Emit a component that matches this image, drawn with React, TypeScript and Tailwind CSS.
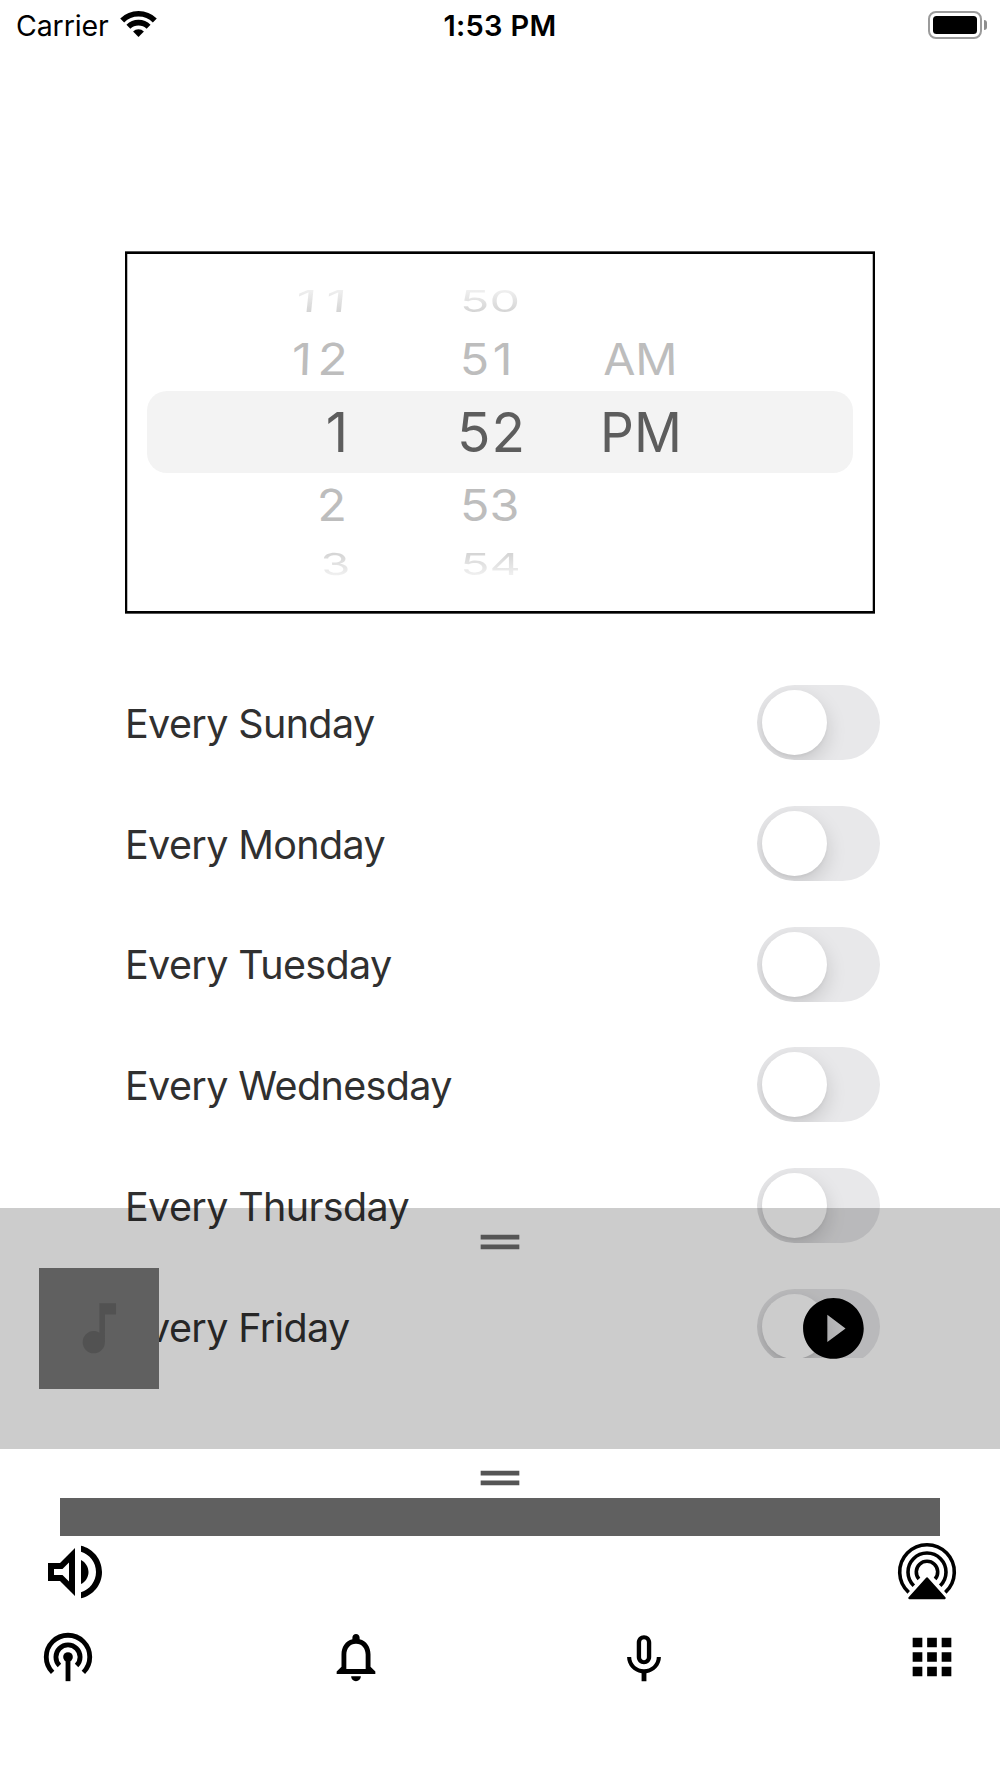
import React from "react";

type CellProps = { text: string; sx?: number; sy?: number; skew?: number; dx?: number; dy?: number; ls?: number };

const DAYS = ["Sunday", "Monday", "Tuesday", "Wednesday", "Thursday", "Friday"];

const ROWS = [
  "h-[58px] bg-gradient-to-b from-[#f0f0f0] from-15% to-[#d4d4d4] to-85% bg-clip-text text-transparent",
  "h-[61px] text-[#bdbdbd]",
  "h-[82px] text-[#5d5d5d]",
  "h-[61px] text-[#bdbdbd]",
  "h-[58px] bg-gradient-to-b from-[#d4d4d4] from-15% to-[#f0f0f0] to-85% bg-clip-text text-transparent",
];

function Wheel({ cells, origin, className }: { cells: (CellProps | null)[]; origin: string; className: string }) {
  return (
    <div className={`flex flex-col text-[55px] ${className}`}>
      {cells.map((c, i) => (
        <div
          key={i}
          className={`whitespace-nowrap leading-none flex items-center ${ROWS[i]}`}
          style={
            c
              ? {
                  letterSpacing: c.ls ?? 0,
                  marginRight: -(c.ls ?? 0),
                  transformOrigin: origin,
                  transform: `translate(${c.dx ?? 0}px, ${c.dy ?? 0}px) skewX(${c.skew ?? 0}deg) scale(${c.sx ?? 1}, ${c.sy ?? 1})`,
                }
              : undefined
          }
        >
          {c ? c.text : ""}
        </div>
      ))}
    </div>
  );
}

function Switch() {
  return (
    <div className="h-[75px] w-[123px] overflow-hidden rounded-full bg-[#e8e8ea] px-[4.5px] py-[5px]">
      <div className="size-[65px] rounded-full bg-white shadow-[0_8px_20px_rgba(0,0,0,0.15),0_2px_3px_rgba(0,0,0,0.04)]" />
    </div>
  );
}

function Icon({ d, className }: { d: string; className: string }) {
  return (
    <svg viewBox="0 0 24 24" fill="currentColor" className={className}>
      <path d={d} />
    </svg>
  );
}

const HANDLE = "M20 9H4v2h16V9zM4 15h16v-2H4v2z";
const NOTE = "M12 3v10.55c-.59-.34-1.27-.55-2-.55-2.21 0-4 1.79-4 4s1.79 4 4 4 4-1.79 4-4V7h4V3h-6z";
const PLAY = "M12 2C6.48 2 2 6.48 2 12s4.48 10 10 10 10-4.48 10-10S17.52 2 12 2zm-2 14.5v-9l6 4.5-6 4.5z";
const VOLUME =
  "M3 9v6h4l5 5V4L7 9H3zm7-.17v6.34L7.83 13H5v-2h2.83L10 8.83zM16.5 12c0-1.77-1.02-3.29-2.5-4.03v8.05c1.48-.73 2.5-2.25 2.5-4.02zM14 3.23v2.06c2.89.86 5 3.54 5 6.71s-2.11 5.85-5 6.71v2.06c4.01-.91 7-4.49 7-8.77s-2.99-7.86-7-8.77z";
const BELL =
  "M12 22c1.1 0 2-.9 2-2h-4c0 1.1.89 2 2 2zm6-6v-5c0-3.07-1.64-5.64-4.5-6.32V4c0-.83-.67-1.5-1.5-1.5s-1.5.67-1.5 1.5v.68C7.63 5.36 6 7.92 6 11v5l-2 2v1h16v-1l-2-2zm-2 1H8v-6c0-2.48 1.51-4.5 4-4.5s4 2.02 4 4.5v6z";
const MIC =
  "M12 15c1.66 0 2.99-1.34 2.99-3L15 6c0-1.66-1.34-3-3-3S9 4.34 9 6v6c0 1.66 1.34 3 3 3zm-1.2-9.1c0-.66.54-1.2 1.2-1.2.66 0 1.2.54 1.2 1.2l-.01 6.2c0 .66-.53 1.2-1.19 1.2-.66 0-1.2-.54-1.2-1.2V5.9zm6.5 6.1c0 3-2.54 5.1-5.3 5.1S6.7 15 6.7 12H5c0 3.41 2.72 6.23 6 6.72V22h2v-3.28c3.28-.48 6-3.3 6-6.72h-1.7z";
const APPS =
  "M4 8h4V4H4v4zm6 12h4v-4h-4v4zm-6 0h4v-4H4v4zm0-6h4v-4H4v4zm6 0h4v-4h-4v4zm6-10v4h4V4h-4zm-6 4h4V4h-4v4zm6 6h4v-4h-4v4zm0 6h4v-4h-4v4z";

function StatusBar() {
  return (
    <header className="grid h-[50px] shrink-0 grid-cols-3 items-center text-[28.5px] leading-none text-black">
      <div className="flex items-center gap-[11px] pl-4">
        <span className="w-[93px] whitespace-nowrap pt-[2px] tracking-[-0.1px]">Carrier</span>
        <svg viewBox="0 0 37 27" className="-mt-[3px] h-[27px] w-[37px]">
          <g fill="none" stroke="#000" strokeWidth="5.6">
            <path d="M2.2 10.4A23.2 23.2 0 0 1 34.8 10.4" />
            <path d="M8.4 16.8A14.4 14.4 0 0 1 28.6 16.8" />
          </g>
          <path d="M18.5 27l-5.4-5.5a7.7 7.7 0 0 1 10.8 0z" />
        </svg>
      </div>
      <div className="text-center text-[29px] font-semibold tracking-[0.3px]">
        <span>1:53 PM</span>
      </div>
      <div className="-mt-[2px] flex items-center justify-end gap-[2.5px] pr-[13px] pt-px">
        <div className="h-[28px] w-[54px] shrink-0 rounded-[8px] border-2 border-[#9b9b9b] p-[3px]">
          <div className="h-[18px] w-[44px] rounded-[3.5px] bg-black" />
        </div>
        <div className="h-[10px] w-[3px] rounded-r-full bg-[#8e8e8e]" />
      </div>
    </header>
  );
}

function Broadcast() {
  return (
    <svg viewBox="0 0 24 24" className="size-[58px]">
      <g fill="none" stroke="#000" strokeWidth="2">
        <path d="M5.64 18.36a9 9 0 1 1 12.72 0" />
        <path d="M8.46 15.54a5 5 0 1 1 7.08 0" />
        <path d="M12 12v10" />
      </g>
      <circle cx="12" cy="12" r="2" />
    </svg>
  );
}

function AirPlay() {
  return (
    <svg viewBox="-30 -30 60 60" className="size-[60px]">
      <g fill="none" stroke="#000" strokeWidth="3.6">
        <path d="M-18.3 20.3A27.3 27.3 0 1 1 18.3 20.3" />
        <path d="M-13.2 13.7A19 19 0 1 1 13.2 13.7" />
        <path d="M-8.1 7A10.7 10.7 0 1 1 8.1 7" />
      </g>
      <path d="M-17.5 26L0 6.5L17.5 26z" stroke="#000" strokeWidth="2.4" strokeLinejoin="round" />
    </svg>
  );
}

export default function App() {
  return (
    <div className="relative flex h-[1778px] w-[1000px] flex-col overflow-hidden bg-white font-['Inter','Liberation_Sans',sans-serif]">
      <StatusBar />

      <main className="flex h-[1308px] shrink-0 flex-col overflow-hidden pt-[202px]">
        <section className="relative ml-[125px] h-[361px] w-[750px] shrink-0 border-2 border-black shadow-[0_-1px_0_#555,0_1px_0_#555,inset_1px_0_0_#bbb,inset_-1px_0_0_#bbb]">
          <div className="absolute left-[20px] top-[137px] h-[82px] w-[706px] rounded-[20px] bg-[#f3f3f3]" />
          <div className="relative flex pt-[18px]">
            <Wheel
              className="w-[220px] items-end"
              origin="right center"
              cells={[
                { text: "11", sx: 0.92, sy: 0.55, skew: -6, dx: -1, ls: 10 },
                { text: "12", sx: 0.89, sy: 0.8, skew: -2, dy: -1, ls: 7 },
                { text: "1", dx: 1 },
                { text: "2", sx: 0.88, sy: 0.8, skew: 2, dy: 2 },
                { text: "3", sx: 0.86, sy: 0.55, skew: 5, dx: 3, dy: 1 },
              ]}
            />
            <Wheel
              className="ml-[76px] w-[136px] items-center"
              origin="center"
              cells={[
                { text: "50", sx: 0.88, sy: 0.55, dx: -1 },
                { text: "51", sx: 0.88, sy: 0.8, dx: -5, dy: -1, ls: 4 },
                { text: "52", ls: 1 },
                { text: "53", sx: 0.88, sy: 0.8, dx: -1, dy: 2 },
                { text: "54", sx: 0.88, sy: 0.55, dx: -1, dy: 1 },
              ]}
            />
            <Wheel
              className="ml-[41px] items-start"
              origin="left center"
              cells={[null, { text: "AM", sx: 0.85, sy: 0.8, skew: 1, dx: 3, dy: -1 }, { text: "PM", sx: 0.965, dx: 0 }, null, null]}
            />
          </div>
        </section>

        <ul className="mt-[72px] flex shrink-0 flex-col gap-[45.8px] pl-[125px] pr-[120px]">
          {DAYS.map((d) => (
            <li key={d} className="flex h-[75px] items-center justify-between">
              <span className="whitespace-nowrap pt-[4px] text-[39.5px] leading-none tracking-[-0.63px] text-[#303030]">Every {d}</span>
              <Switch />
            </li>
          ))}
        </ul>
      </main>

      {/* Collapsed player, translucent over the end of the list */}
      <section className="absolute left-0 top-[1208px] h-[241px] w-full bg-black/20">
        <div className="flex h-[60px] items-center justify-center pt-[7px]">
          <Icon d={HANDLE} className="size-[58px] text-[#555]" />
        </div>
        <div className="flex h-[121px] items-center justify-between pl-[39px] pr-[130.5px]">
          <div className="flex h-[121px] w-[120px] items-center justify-center bg-[#606060]">
            <Icon d={NOTE} className="size-[66.7px] text-[#525252]" />
          </div>
          <Icon d={PLAY} className="size-[72.8px] text-black" />
        </div>
      </section>

      <footer className="mt-[91px] flex flex-col">
        <div className="flex h-[49px] items-center justify-center pt-[9px]">
          <Icon d={HANDLE} className="size-[58px] shrink-0 text-[#555]" />
        </div>
        <div className="mx-[60px] h-[38px] bg-[#606060]" />
        <div className="flex h-[72px] items-center justify-between pl-[39px] pr-[43px]">
          <Icon d={VOLUME} className="size-[72px] shrink-0 text-black" />
          <AirPlay />
        </div>
        <nav className="mt-[20px] flex items-center justify-between px-[39px]">
          <Broadcast />
          <Icon d={BELL} className="size-[58px] text-black" />
          <Icon d={MIC} className="size-[58px] text-black" />
          <Icon d={APPS} className="size-[58px] text-black" />
        </nav>
      </footer>
    </div>
  );
}
